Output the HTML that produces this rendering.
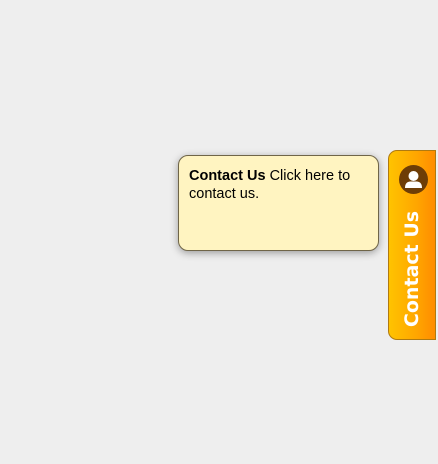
<!DOCTYPE html>
<html><head><style>
html,body{margin:0;padding:0;width:438px;height:464px;background:#eeeeee;overflow:hidden;font-family:"Liberation Sans",sans-serif;}
.tip{position:absolute;left:178px;top:155px;width:199px;height:94px;background:#fff4c1;border:1px solid #6f6548;border-radius:10px;box-shadow:0 2px 8px rgba(0,0,0,0.35);}
.tip p{margin:0;position:absolute;left:10px;top:11px;width:180px;font-size:14.5px;line-height:18px;color:#000;}
.tab{position:absolute;left:388px;top:150px;width:48px;height:190px;border:1px solid #b07a10;border-radius:9px 0 0 9px;background:linear-gradient(to right,#ffc300,#ffa600 60%,#ff8c00);box-sizing:border-box;}
.ic{position:absolute;left:10px;top:14px;width:29px;height:29px;border-radius:50%;background:#6e3d06;overflow:hidden;}
.txt{position:absolute;left:23px;top:118px;transform:translate(-50%,-50%) rotate(-90deg);white-space:nowrap;color:#fff;font-family:"DejaVu Sans","Liberation Sans",sans-serif;font-weight:bold;font-size:19px;}
</style></head><body>
<div class="tip"><p><b>Contact Us</b> Click here to contact us.</p></div>
<div class="tab">
<div class="ic"><svg width="29" height="29" viewBox="0 0 29 29"><circle cx="14.5" cy="11" r="5" fill="#fff"/><path d="M6 23 Q6 17 11 16.5 L18 16.5 Q23 17 23 23 Z" fill="#fff"/></svg></div>
<div class="txt">Contact Us</div>
</div>
</body></html>
